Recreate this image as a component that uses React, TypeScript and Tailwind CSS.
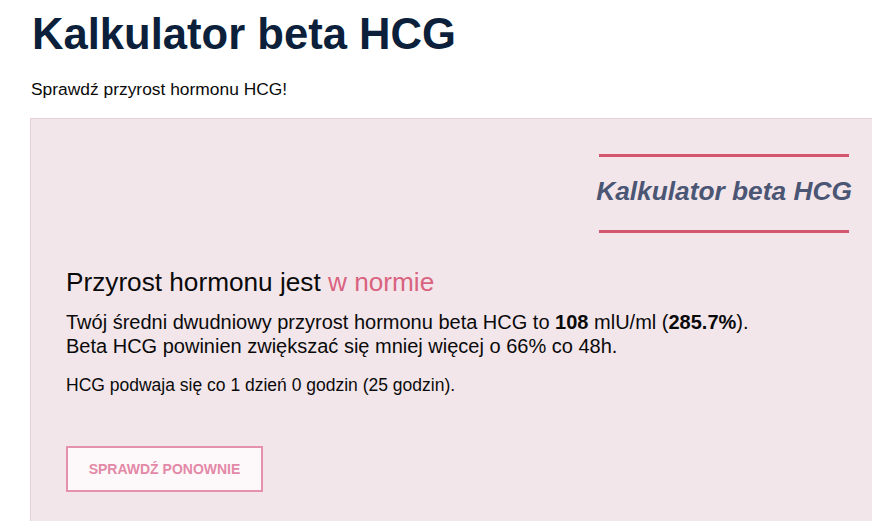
import React from 'react';

const font = { fontFamily: '"Liberation Sans", Arial, sans-serif' };

const ResultPanel: React.FC = () => {
  return (
    <div className="w-[856px] border border-[#e6d0d8] bg-[#f3e6eb] pt-[35px] pb-[40px] pl-[35px] pr-[36px]">
      <div className="flex justify-end">
        <div className="flex w-[250px] flex-col items-center">
          <div className="h-[3px] w-full bg-[#d5566f]" />
          <div className="whitespace-nowrap pt-[19px] pb-[24px] text-[26.3px] font-bold italic leading-[30px] text-[#4a5674]">
            Kalkulator beta HCG
          </div>
          <div className="h-[3px] w-full bg-[#d5566f]" />
        </div>
      </div>

      <h2 className="mt-[33px] text-[26.2px] leading-[32px] text-[#0a0a0a]">
        Przyrost hormonu jest <span className="text-[#d9637f]">w normie</span>
      </h2>
      <p className="mt-[12px] text-[20px] leading-[24px] text-[#0a0a0a]">
        Twój średni dwudniowy przyrost hormonu beta HCG to <b>108</b> mlU/ml (<b>285.7%</b>).
        <br />
        Beta HCG powinien zwiększać się mniej więcej o 66% co 48h.
      </p>
      <p className="mt-[16px] text-[17.5px] leading-[22px] text-[#0a0a0a]">
        HCG podwaja się co 1 dzień 0 godzin (25 godzin).
      </p>

      <button
        type="button"
        className="mt-[50px] h-[46px] w-[197px] border-2 border-[#e590ac] bg-[#fdf8fa] text-[14px] font-bold text-[#e389a7]"
      >
        SPRAWDŹ PONOWNIE
      </button>
    </div>
  );
};

const App: React.FC = () => {
  return (
    <div className="min-h-screen bg-white pl-[30px] pt-[8px]" style={font}>
      <h1 className="ml-[2px] text-[43.6px] font-bold leading-[52px] text-[#0c1f3b]">Kalkulator beta HCG</h1>
      <p className="mt-[19px] ml-[1px] text-[17.4px] leading-[20px] text-[#0a0a0a]">Sprawdź przyrost hormonu HCG!</p>
      <div className="mt-[19px]">
        <ResultPanel />
      </div>
    </div>
  );
};

export default App;
